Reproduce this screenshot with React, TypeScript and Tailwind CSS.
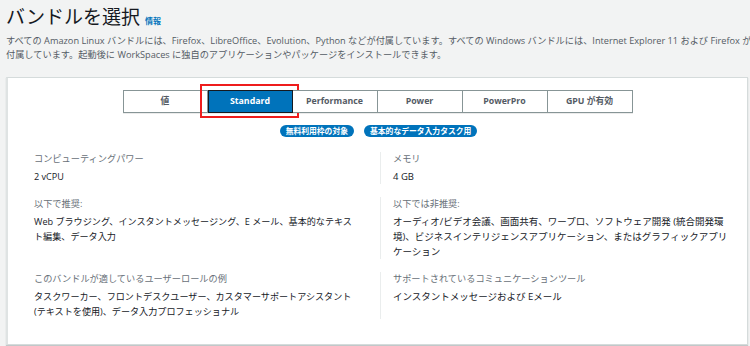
import React from "react";

const font = {
  fontFamily: '"Open Sans", "Noto Sans CJK JP", sans-serif',
};

function Cell({
  label,
  lines,
  border,
}: {
  label: string;
  lines: string[];
  border?: boolean;
}) {
  return (
    <div className={border ? "border-l border-[#eaeded] pl-[12px]" : ""}>
      <div className="text-[9.2px] leading-[14px] text-[#687078] whitespace-nowrap mb-[3px]">
        {label}
      </div>
      {lines.map((l, i) => (
        <div
          key={i}
          className={
            "leading-[15px] text-[#16191f] whitespace-nowrap " +
            (border ? "text-[9.5px]" : "text-[9.1px]")
          }
        >
          {l}
        </div>
      ))}
    </div>
  );
}

export default function App() {
  const tabs = ["値", "Standard", "Performance", "Power", "PowerPro", "GPU が有効"];
  return (
    <div
      className="w-[750px] h-[346px] bg-[#f2f3f3] overflow-hidden"
      style={font}
    >
      <div className="pl-[6px] pt-[4px]">
        <div className="flex items-baseline gap-[5px]">
          <h1 className="text-[19px] leading-[26px] font-normal text-[#16191f]">
            バンドルを選択
          </h1>
          <span className="text-[8px] font-bold text-[#0073bb]">情報</span>
        </div>
        <p className="mt-[4px] text-[9.2px] leading-[14px] text-[#545b64] whitespace-nowrap">
          すべての Amazon Linux バンドルには、Firefox、LibreOffice、Evolution、Python
          などが付属しています。すべての Windows バンドルには、Internet Explorer 11 および
          Firefox が
          <br />
          付属しています。起動後に WorkSpaces
          に独自のアプリケーションやパッケージをインストールできます。
        </p>
      </div>
      <div className="ml-[6px] mr-[2px] mt-[15px] h-[268px] bg-white border border-[#d5dbdb] border-l-2 border-l-[#dfe3e3] shadow-[0_1px_1px_rgba(0,28,36,0.2)]">
        <div className="flex justify-center pt-[12px]">
          <div className="flex shadow-[0_1px_0_rgba(0,0,0,0.08)]">
            {tabs.map((t, i) => {
              const sel = t === "Standard";
              return (
                <div
                  key={t}
                  className={
                    "relative w-[85px] h-[23px] flex items-center justify-center text-[8.8px] font-bold border-y " +
                    (i === 0 ? "border-l " : "") +
                    (sel
                      ? "bg-[#0073bb] text-white border-[#16191f] border-x "
                      : "bg-white text-[#545b64] border-[#879596] border-r ")
                  }
                >
                  {t}
                  {sel && (
                    <div className="absolute -left-[9px] -right-[7px] -top-[7px] -bottom-[6px] border-2 border-[#ee1c1c]" />
                  )}
                </div>
              );
            })}
          </div>
        </div>
        <div className="flex justify-center gap-[10px] mt-[12px] pl-[2px]">
          <span className="h-[12px] px-[6px] rounded-full bg-[#0073bb] text-white text-[7.8px] font-bold leading-[12px]">
            無料利用枠の対象
          </span>
          <span className="h-[12px] px-[6px] rounded-full bg-[#0073bb] text-white text-[7.8px] font-bold leading-[12px]">
            基本的なデータ入力タスク用
          </span>
        </div>
        <div className="grid grid-cols-[346px_1fr] gap-y-[13px] pl-[26px] mt-[15px]">
          <Cell label="コンピューティングパワー" lines={["2 vCPU"]} />
          <Cell label="メモリ" lines={["4 GB"]} border />
          <Cell
            label="以下で推奨:"
            lines={[
              "Web ブラウジング、インスタントメッセージング、E メール、基本的なテキス",
              "ト編集、データ入力",
            ]}
          />
          <Cell
            label="以下では非推奨:"
            lines={[
              "オーディオ/ビデオ会議、画面共有、ワープロ、ソフトウェア開発 (統合開発環",
              "境)、ビジネスインテリジェンスアプリケーション、またはグラフィックアプリ",
              "ケーション",
            ]}
            border
          />
          <Cell
            label="このバンドルが適しているユーザーロールの例"
            lines={[
              "タスクワーカー、フロントデスクユーザー、カスタマーサポートアシスタント",
              "(テキストを使用)、データ入力プロフェッショナル",
            ]}
          />
          <Cell
            label="サポートされているコミュニケーションツール"
            lines={["インスタントメッセージおよび Eメール"]}
            border
          />
        </div>
      </div>
    </div>
  );
}
